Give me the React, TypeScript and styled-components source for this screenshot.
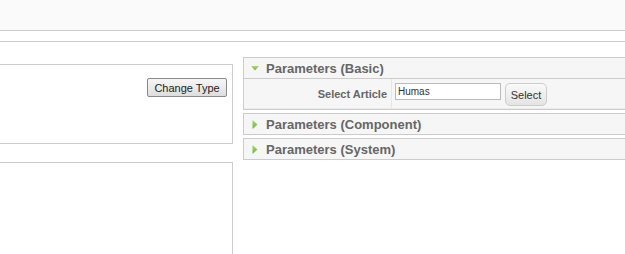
import React from 'react';
import styled, { createGlobalStyle } from 'styled-components';

const GlobalStyle = createGlobalStyle`
    html, body {
        margin: 0;
        padding: 0;
        background: #fff;
    }
    body {
        font-family: "Liberation Sans", Arial, sans-serif;
        font-size: 11px;
        color: #333;
    }
`;

const Page = styled.div`
    width: 625px;
    height: 254px;
    overflow: hidden;
`;

const TopBar = styled.div`
    height: 30px;
    background: #fafafa;
    border-bottom: 1px solid #ccc;
`;

const SubBar = styled.div`
    height: 10px;
    border-bottom: 1px solid #ccc;
`;

const Main = styled.div`
    display: grid;
    grid-template-columns: 243px 420px;
    column-gap: 10px;
    margin-left: -10px;
`;

const LeftColumn = styled.div`
    padding-top: 22px;
    display: flex;
    flex-direction: column;
    gap: 18px;
`;

const Box = styled.div<{ $height: number }>`
    box-sizing: border-box;
    height: ${props => props.$height}px;
    border: 1px solid #ccc;
`;

const BoxTools = styled.div`
    display: flex;
    justify-content: flex-end;
    padding: 13px 5px 0 0;
`;

const OldButton = styled.button`
    box-sizing: border-box;
    width: 80px;
    height: 19px;
    padding: 0;
    border: 1px solid #8a8a8a;
    border-radius: 2px;
    background: linear-gradient(#f6f6f6, #ebebeb 50%, #dddddd);
    font-family: "Liberation Sans", Arial, sans-serif;
    font-size: 11px;
    color: #222;
`;

const RightColumn = styled.div`
    padding-top: 15px;
    display: flex;
    flex-direction: column;
    gap: 3px;
`;

const Pane = styled.div`
    border: 1px solid #ccc;
    background: #f6f6f6;
`;

const PaneHeader = styled.div<{ $open: boolean }>`
    height: 20px;
    display: flex;
    align-items: center;
    gap: 7px;
    padding-left: 7px;
    border-bottom: ${props => (props.$open ? '1px solid #ccc' : 'none')};
`;

const Arrow = styled.svg`
    width: 8px;
    height: 9px;
    flex: none;
`;

const PaneTitle = styled.span`
    font-size: 13px;
    font-weight: bold;
    color: #666;
`;

const ParamRow = styled.div`
    display: flex;
    height: 30px;
    border-bottom: 1px solid #ebebeb;
    box-sizing: border-box;
`;

const ParamLabel = styled.div`
    width: 148px;
    border-right: 1px solid #e6e6e6;
    display: flex;
    align-items: center;
    justify-content: flex-end;
    padding-right: 4px;
    box-sizing: border-box;
    font-size: 11px;
    font-weight: bold;
    color: #666;
`;

const ParamValue = styled.div`
    display: flex;
    align-items: flex-start;
    gap: 4px;
    padding: 4px 0 0 3px;
`;

const TextInput = styled.input`
    box-sizing: border-box;
    width: 106px;
    height: 17px;
    padding: 0 2px;
    border: 1px solid #bbb;
    background: #fff;
    font-family: "Liberation Sans", Arial, sans-serif;
    font-size: 10px;
    color: #333;
    outline: none;
`;

const RoundButton = styled.button`
    box-sizing: border-box;
    width: 42px;
    height: 23px;
    padding: 0;
    border: 1px solid #ccc;
    border-radius: 5px;
    background: linear-gradient(#fafafa, #e4e4e4);
    font-family: "Liberation Sans", Arial, sans-serif;
    font-size: 11px;
    color: #333;
`;

const ArrowIcon = ({ open }: { open: boolean }) => (
    <Arrow viewBox="0 0 8 9">
        <defs>
            <linearGradient id={open ? 'gd' : 'gr'} x1="0" y1="0" x2="0" y2="1">
                <stop offset="0" stopColor="#a6dc72" />
                <stop offset="1" stopColor="#6bb53a" />
            </linearGradient>
        </defs>
        {open ? (
            <polygon points="0,2 8,2 4,6.5" fill="url(#gd)" />
        ) : (
            <polygon points="1.5,0 6.5,4.5 1.5,9" fill="url(#gr)" />
        )}
    </Arrow>
);

const panes = [
    { title: 'Parameters (Basic)', open: true },
    { title: 'Parameters (Component)', open: false },
    { title: 'Parameters (System)', open: false },
];

const App: React.FC = () => {
    return (
        <Page>
            <GlobalStyle />
            <TopBar />
            <SubBar />
            <Main>
                <LeftColumn>
                    <Box $height={80}>
                        <BoxTools>
                            <OldButton type="button">Change Type</OldButton>
                        </BoxTools>
                    </Box>
                    <Box $height={140} />
                </LeftColumn>
                <RightColumn>
                    {panes.map(pane => (
                        <Pane key={pane.title}>
                            <PaneHeader $open={pane.open}>
                                <ArrowIcon open={pane.open} />
                                <PaneTitle>{pane.title}</PaneTitle>
                            </PaneHeader>
                            {pane.open && (
                                <ParamRow>
                                    <ParamLabel>Select Article</ParamLabel>
                                    <ParamValue>
                                        <TextInput defaultValue="Humas" />
                                        <RoundButton type="button">Select</RoundButton>
                                    </ParamValue>
                                </ParamRow>
                            )}
                        </Pane>
                    ))}
                </RightColumn>
            </Main>
        </Page>
    );
};

export default App;
